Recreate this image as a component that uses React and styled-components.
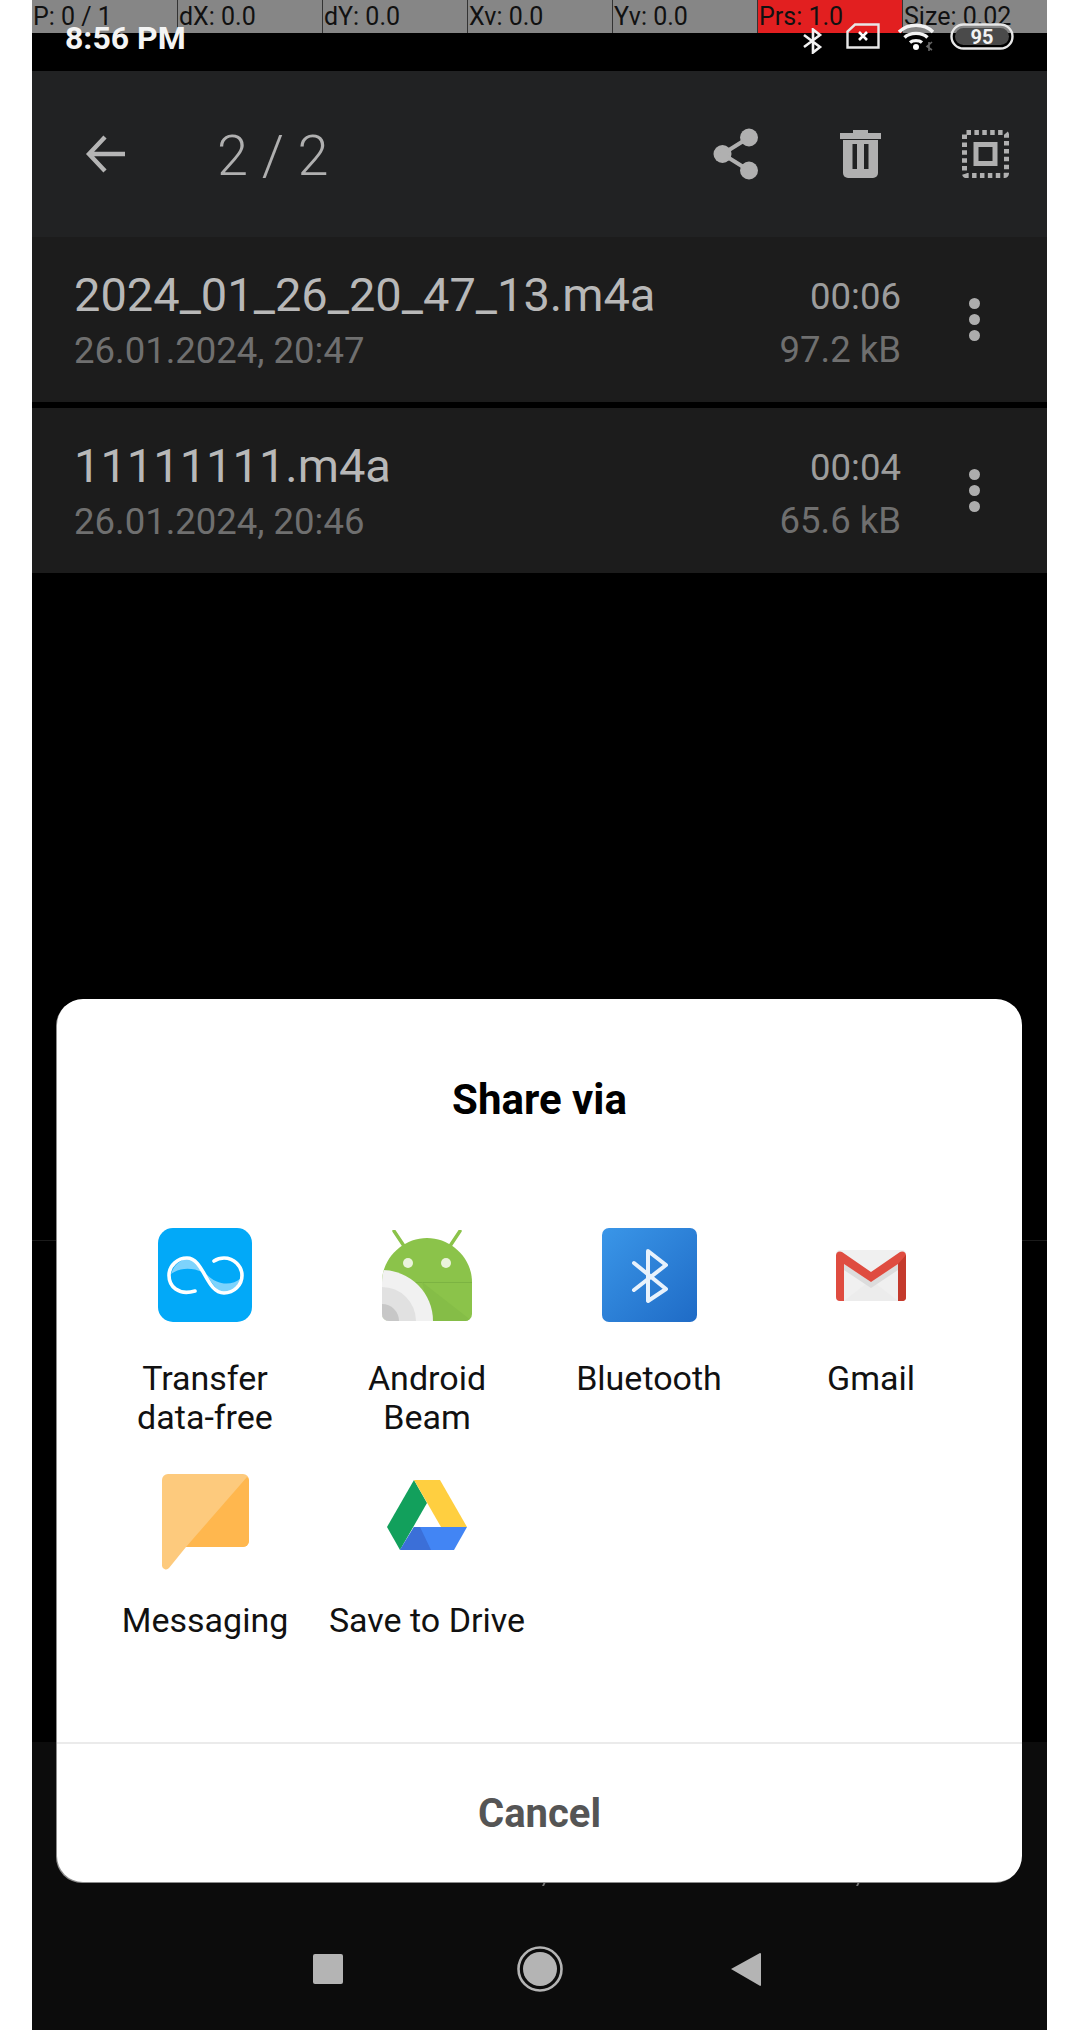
import React from 'react';
import styled, { createGlobalStyle } from 'styled-components';

const GlobalStyle = createGlobalStyle`
  html, body { margin: 0; padding: 0; background: #fff; }
  body { font-family: Roboto, "Liberation Sans", sans-serif; }
`;

// Phone screen, with white strips left and right
const Screen = styled.div`
  position: relative;
  width: 1015px;
  height: 2030px;
  margin: 0 0 0 32px;
  display: flex;
  flex-direction: column;
  background: #000;
  overflow: hidden;
`;

// Developer "pointer location" strip that lies over the status bar
const PointerBar = styled.div`
  position: absolute;
  top: 0;
  left: 0;
  right: 0;
  height: 33px;
  display: grid;
  grid-template-columns: repeat(7, 1fr);
  z-index: 1;
`;

const PointerCell = styled.div`
  background: ${p => (p.$alert ? '#e21f20' : '#868686')};
  border-left: ${p => (p.$first ? 'none' : '1px solid #333')};
  color: #111;
  font-size: 25px;
  line-height: 33px;
  padding-left: 1px;
  white-space: nowrap;
  overflow: hidden;
`;

const StatusBar = styled.div`
  position: relative;
  z-index: 2;
  height: 71px;
  flex: none;
  display: flex;
  align-items: flex-start;
  padding: 0 33px 0 33px;
  box-sizing: border-box;
`;

const Clock = styled.div`
  color: #f4f4f4;
  font-size: 32px;
  font-weight: 700;
  line-height: 34px;
  margin-top: 21px;
`;

const StatusIcons = styled.div`
  margin-left: auto;
  display: flex;
  align-items: flex-start;
  padding-top: 23px;
`;

const Toolbar = styled.div`
  height: 166px;
  flex: none;
  display: flex;
  align-items: center;
  background: #212223;
  padding: 0 38px 0 53px;
  box-sizing: border-box;
`;

const Counter = styled.div`
  color: #b0b0b0;
  font-size: 56px;
  font-weight: 350;
  margin: 4px 0 0 91px;
`;

const ToolIcons = styled.div`
  margin-left: auto;
  display: flex;
  align-items: center;
  gap: 81px;
`;

const List = styled.div`
  flex: none;
  display: flex;
  flex-direction: column;
  gap: 6px;
`;

const Row = styled.div`
  height: 165px;
  display: flex;
  align-items: center;
  background: #1c1c1c;
  padding: 6px 0 0 42px;
  box-sizing: border-box;
`;

const RowMain = styled.div`
  flex: 1;
  display: flex;
  flex-direction: column;
`;

const RowMeta = styled.div`
  display: flex;
  flex-direction: column;
  align-items: flex-end;
`;

const PrimaryText = styled.div`
  color: ${p => (p.$dim ? '#9c9c9c' : '#b8b8b8')};
  font-size: ${p => (p.$dim ? '36.5px' : '47px')};
  line-height: 54px;
`;

const SecondaryText = styled.div`
  color: #6f6f6f;
  font-size: 36.5px;
  line-height: 52px;
  margin-top: ${p => (p.$tight ? '0' : '3px')};
`;

const MoreButton = styled.div`
  width: 146px;
  display: flex;
  justify-content: center;
  flex: none;
  margin-top: -6px;
`;

const Dots = styled.div`
  display: flex;
  flex-direction: column;
  gap: 5px;
  & > i {
    display: block;
    width: 11px;
    height: 11px;
    border-radius: 50%;
    background: #adadad;
  }
`;

const Empty = styled.div`
  flex: 1;
  display: flex;
  flex-direction: column;
  justify-content: flex-end;
`;

const HiddenPanel = styled.div`
  height: 502px;
  border-top: 1px solid #1b1b1b;
  box-sizing: border-box;
`;

const NavBar = styled.div`
  height: 288px;
  flex: none;
  background: #0c0c0c;
  display: flex;
  align-items: flex-start;
  justify-content: center;
  padding-top: 200px;
  box-sizing: border-box;
`;

const NavSlot = styled.div`
  width: 212px;
  height: 54px;
  display: flex;
  align-items: center;
  justify-content: center;
  padding-right: ${p => p.$inset || 0}px;
  box-sizing: border-box;
`;

// Share sheet lying over the whole screen
const Dialog = styled.div`
  position: absolute;
  left: 25px;
  top: 999px;
  width: 965px;
  height: 883px;
  background: #fff;
  border-radius: 26px;
  box-shadow: -1px 1px 0 #8c8c8c;
  display: flex;
  flex-direction: column;
  z-index: 3;
`;

const DialogTitle = styled.div`
  color: #000;
  font-size: 42px;
  font-weight: 700;
  line-height: 48px;
  text-align: center;
  padding: 77px 0 103px;
`;

const AppGrid = styled.div`
  flex: 1;
  display: grid;
  grid-template-columns: repeat(4, 222px);
  grid-auto-rows: min-content;
  row-gap: 32px;
  padding-left: 37px;
`;

const AppCell = styled.div`
  display: flex;
  flex-direction: column;
  align-items: center;
`;

const IconSlot = styled.div`
  height: 96px;
  display: flex;
  align-items: center;
  justify-content: center;
  transform: translateY(${p => p.$shift || 0}px);
  margin-bottom: 36px;
`;

const AppLabel = styled.div`
  color: #111;
  font-size: 34px;
  line-height: 39px;
  text-align: center;
  white-space: pre-line;
  min-height: ${p => (p.$tall ? '78px' : '0')};
`;

const CancelButton = styled.div`
  flex: none;
  height: 140px;
  border-top: 2px solid #ebebeb;
  box-sizing: border-box;
  color: #555;
  font-size: 40px;
  font-weight: 700;
  display: flex;
  align-items: center;
  justify-content: center;
`;

// Descender tails of text that is hidden behind the dialog
const Tail = styled.span`
  position: absolute;
  top: 1882px;
  left: ${p => p.$x}px;
  width: 2px;
  height: 4px;
  background: #777;
  transform: skewX(-25deg);
  z-index: 2;
`;

const BluetoothMark = () => (
  <svg width="22" height="26" viewBox="0 0 22 26" style={{ marginTop: 5, marginRight: 22 }}>
    <path d="M2 7 L18 19 L11 24.5 V1.5 L18 7 L2 19" fill="none" stroke="#f2f2f2" strokeWidth="2.6" />
  </svg>
);

const NoSimMark = () => (
  <svg width="34" height="26" viewBox="0 0 34 26" style={{ marginRight: 18 }}>
    <path d="M9 1.5 H32.5 V24.5 H1.5 V8.5 Z" fill="none" stroke="#e8e8e8" strokeWidth="2.4" />
    <path d="M13 9 L21 17 M21 9 L13 17" stroke="#fff" strokeWidth="2.6" />
  </svg>
);

const WifiMark = () => (
  <svg width="38" height="28" viewBox="0 0 38 28" style={{ marginRight: 14 }}>
    <g fill="none" stroke="#f4f4f4" strokeWidth="3.4">
      <path d="M1 9 C10 0 26 0 35 9" />
      <path d="M6.5 14.5 C12 9 24 9 29.5 14.5" />
      <path d="M12 19.5 C15 17 21 17 24 19.5" />
    </g>
    <circle cx="18" cy="24" r="3" fill="#fff" />
    <path d="M31 19 V28 M34 19 L29 23.5 L34 27" stroke="#666" strokeWidth="1.6" fill="none" />
  </svg>
);

const BatteryMark = () => (
  <svg width="64" height="28" viewBox="0 0 64 28">
    <rect x="1.5" y="1.5" width="61" height="24" rx="12" fill="none" stroke="#e8e8e8" strokeWidth="2.4" />
    <rect x="5" y="5" width="54" height="17" rx="8.5" fill="#4a4a4a" />
    <text x="32" y="21" fontFamily="Roboto, sans-serif" fontSize="20" fontWeight="700" fill="#f2f2f2" textAnchor="middle">95</text>
  </svg>
);

const BackArrow = () => (
  <svg width="41" height="40" viewBox="0 0 41 40">
    <path d="M40 20 H4 M20 3 L4 20 L20 37" fill="none" stroke="#b5b5b5" strokeWidth="4.4" />
  </svg>
);

const ShareIcon = () => (
  <svg width="46" height="52" viewBox="0 0 46 52">
    <circle cx="36" cy="9.5" r="9" fill="#b0b0b0" />
    <circle cx="9.5" cy="26" r="9" fill="#b0b0b0" />
    <circle cx="36" cy="42.5" r="9" fill="#b0b0b0" />
    <path d="M36 9.5 L9.5 26 L36 42.5" fill="none" stroke="#b0b0b0" strokeWidth="4" />
  </svg>
);

const TrashIcon = () => (
  <svg width="41" height="48" viewBox="0 0 41 48">
    <path d="M13 0 H28 V3 H41 V9 H0 V3 H13 Z" fill="#b0b0b0" />
    <path d="M3 10 H38 V43 a5 5 0 0 1 -5 5 H8 a5 5 0 0 1 -5 -5 Z" fill="#b0b0b0" />
    <rect x="12.5" y="14" width="4.5" height="25" fill="#212223" />
    <rect x="24" y="14" width="4.5" height="25" fill="#212223" />
  </svg>
);

const SelectIcon = () => (
  <svg width="47" height="48" viewBox="0 0 47 48">
    <rect x="2.5" y="2.5" width="42" height="43" rx="2" fill="none" stroke="#b0b0b0" strokeWidth="5" strokeDasharray="4.5 3.4" />
    <rect x="14" y="14.5" width="19" height="19" fill="none" stroke="#b0b0b0" strokeWidth="5" />
  </svg>
);

const TransferIcon = () => (
  <svg width="94" height="94" viewBox="0 0 94 94">
    <rect width="94" height="94" rx="15" fill="#02a9f8" />
    <path d="M13 46 C16 36 24 31 30 31 C38 31 43 39 48 46 C38 40 24 38 13 46 Z" fill="#7dd3fc" />
    <path d="M48 46 C56 58 60 64 66 64 C74 64 80 58 83 50 C74 58 60 58 48 46 Z" fill="#7dd3fc" />
    <path
      d="M37 63 C20 68 11 58 11 47.5 C11 37 20 30 29 30 C46 30 48 65 66 65 C76 65 84 57 84 47.5 C84 38 76 30 66 30 C62 30 59 31 56 33"
      fill="none"
      stroke="#fff"
      strokeWidth="3.6"
      strokeLinecap="round"
    />
  </svg>
);

const AndroidIcon = () => (
  <svg width="90" height="91" viewBox="0 0 90 91">
    <defs>
      <clipPath id="droidClip">
        <path d="M0 52 C0 28 21 8 45 8 C69 8 90 28 90 52 V84 a7 7 0 0 1 -7 7 H7 a7 7 0 0 1 -7 -7 Z" />
      </clipPath>
    </defs>
    <path d="M12 1 L22 16 M78 1 L68 16" stroke="#8bc34a" strokeWidth="3.4" strokeLinecap="round" />
    <g clipPath="url(#droidClip)">
      <rect width="90" height="91" fill="#8bc34a" />
      <path d="M0 52 H90 V53 H0 Z" fill="#7cb342" />
      <path d="M40 52 L90 91 H50 Z" fill="#85bd47" />
      <circle cx="0" cy="91" r="51" fill="#f1f1f1" />
      <circle cx="0" cy="91" r="34" fill="#e1e1e1" />
      <circle cx="0" cy="91" r="17" fill="#c7c7c7" />
    </g>
    <circle cx="26" cy="33" r="5" fill="#eaf3dc" />
    <circle cx="64" cy="33" r="5" fill="#eaf3dc" />
  </svg>
);

const BluetoothIcon = () => (
  <svg width="95" height="94" viewBox="0 0 95 94">
    <defs>
      <linearGradient id="btFill" x1="0" y1="0" x2="1" y2="1">
        <stop offset="0" stopColor="#3a96e8" />
        <stop offset="1" stopColor="#1f6bc6" />
      </linearGradient>
    </defs>
    <rect width="95" height="94" rx="7" fill="url(#btFill)" />
    <path d="M32 35 L64 61 L46 73 V23 L64 37 L32 62" fill="none" stroke="#e8f2fc" strokeWidth="4" strokeLinejoin="round" strokeLinecap="round" />
  </svg>
);

const GmailIcon = () => (
  <svg width="70" height="51" viewBox="0 0 70 51">
    <rect width="70" height="51" rx="4" fill="#f0f0f0" />
    <path d="M8 51 L35 30 L62 51 Z" fill="#ececec" />
    <path d="M8 14 L35 32 L62 14 L62 20 L35 38 L8 20 Z" fill="#dcdcdc" />
    <path d="M0 5 a4 4 0 0 1 6 -3 L35 22 L64 2 a4 4 0 0 1 6 3 V47 a4 4 0 0 1 -4 4 H62 V14 L35 32 L8 14 V51 H4 a4 4 0 0 1 -4 -4 Z" fill="#df4c40" />
    <path d="M62 14 L70 5 V47 a4 4 0 0 1 -4 4 H62 Z" fill="#c43a2c" />
  </svg>
);

const MessagingIcon = () => (
  <svg width="87" height="96" viewBox="0 0 87 96">
    <path d="M6 0 H81 a6 6 0 0 1 6 6 V67 a6 6 0 0 1 -6 6 H24 L7 94 a4 4 0 0 1 -7 -2 V6 a6 6 0 0 1 6 -6 Z" fill="#fdca7d" />
    <path d="M85 3 a6 6 0 0 1 2 3 V67 a6 6 0 0 1 -6 6 H24 Z" fill="#ffb74e" />
  </svg>
);

const DriveIcon = () => (
  <svg width="80" height="70" viewBox="0 0 80 70">
    <path d="M27 0 L40 23 L13 70 L0 47 Z" fill="#12a05c" />
    <path d="M27 0 H53 L80 47 H54 Z" fill="#ffcf40" />
    <path d="M27 47 H80 L67 70 H13 Z" fill="#4285f4" />
    <path d="M27 47 H33 L44 70 H13 Z" fill="#3b6fd8" />
  </svg>
);

const NavSquare = () => (
  <svg width="30" height="30" viewBox="0 0 30 30">
    <rect width="30" height="30" rx="2" fill="#b4b4b4" />
  </svg>
);

const NavHome = () => (
  <svg width="46" height="46" viewBox="0 0 46 46">
    <circle cx="23" cy="23" r="21.5" fill="none" stroke="#b4b4b4" strokeWidth="2.6" />
    <circle cx="23" cy="23" r="17" fill="#b4b4b4" />
  </svg>
);

const NavBack = () => (
  <svg width="30" height="34" viewBox="0 0 30 34">
    <path d="M29 1 a1 1 0 0 1 1 1 V33 a1 1 0 0 1 -1.6 .5 L0 17 Z" fill="#b4b4b4" />
  </svg>
);

const pointerCells = [
  { text: 'P: 0 / 1' },
  { text: 'dX: 0.0' },
  { text: 'dY: 0.0' },
  { text: 'Xv: 0.0' },
  { text: 'Yv: 0.0' },
  { text: 'Prs: 1.0', alert: true },
  { text: 'Size: 0.02' },
];

const recordings = [
  { name: '2024_01_26_20_47_13.m4a', date: '26.01.2024, 20:47', length: '00:06', size: '97.2 kB' },
  { name: '11111111.m4a', date: '26.01.2024, 20:46', length: '00:04', size: '65.6 kB' },
];

const apps = [
  { label: 'Transfer\ndata-free', icon: <TransferIcon />, tall: true },
  { label: 'Android\nBeam', icon: <AndroidIcon />, tall: true },
  { label: 'Bluetooth', icon: <BluetoothIcon /> },
  { label: 'Gmail', icon: <GmailIcon /> },
  { label: 'Messaging', icon: <MessagingIcon />, shift: 5 },
  { label: 'Save to Drive', icon: <DriveIcon />, shift: -2 },
];

const App = () => (
  <>
    <GlobalStyle />
    <Screen>
      <PointerBar>
        {pointerCells.map((cell, i) => (
          <PointerCell key={cell.text} $first={i === 0} $alert={cell.alert}>{cell.text}</PointerCell>
        ))}
      </PointerBar>
      <StatusBar>
        <Clock>8:56 PM</Clock>
        <StatusIcons>
          <BluetoothMark />
          <NoSimMark />
          <WifiMark />
          <BatteryMark />
        </StatusIcons>
      </StatusBar>
      <Toolbar>
        <BackArrow />
        <Counter>2 / 2</Counter>
        <ToolIcons>
          <ShareIcon />
          <TrashIcon />
          <SelectIcon />
        </ToolIcons>
      </Toolbar>
      <List>
        {recordings.map(rec => (
          <Row key={rec.name}>
            <RowMain>
              <PrimaryText>{rec.name}</PrimaryText>
              <SecondaryText>{rec.date}</SecondaryText>
            </RowMain>
            <RowMeta>
              <PrimaryText $dim>{rec.length}</PrimaryText>
              <SecondaryText $tight>{rec.size}</SecondaryText>
            </RowMeta>
            <MoreButton>
              <Dots><i /><i /><i /></Dots>
            </MoreButton>
          </Row>
        ))}
      </List>
      <Empty>
        <HiddenPanel />
      </Empty>
      <NavBar>
        <NavSlot><NavSquare /></NavSlot>
        <NavSlot><NavHome /></NavSlot>
        <NavSlot $inset={12}><NavBack /></NavSlot>
      </NavBar>
      <Tail $x={511} />
      <Tail $x={825} />
      <Dialog>
        <DialogTitle>Share via</DialogTitle>
        <AppGrid>
          {apps.map(app => (
            <AppCell key={app.label}>
              <IconSlot $shift={app.shift}>{app.icon}</IconSlot>
              <AppLabel $tall={app.tall}>{app.label}</AppLabel>
            </AppCell>
          ))}
        </AppGrid>
        <CancelButton>Cancel</CancelButton>
      </Dialog>
    </Screen>
  </>
);

export default App;
